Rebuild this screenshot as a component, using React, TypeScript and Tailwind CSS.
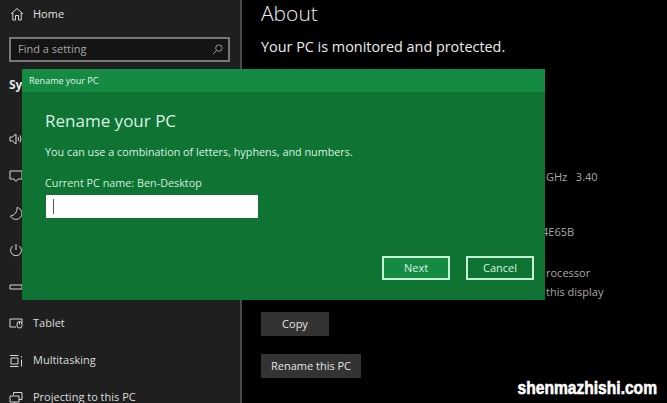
import React from "react";

const S = { fontFamily: '"Open Sans","Noto Sans",sans-serif' };

const ic = "w-[14px] h-[14px] text-[#d8d8d8] shrink-0";
const sv = { fill: "none", stroke: "currentColor", strokeWidth: 1 } as const;

const Home = () => (
  <svg viewBox="0 0 14 14" className={ic} {...sv}><path d="M1 7 7 1.5 13 7M2.8 5.6V13H5.5V8.5H8.5V13H11.2V5.6" /></svg>
);
const Sound = () => (
  <svg viewBox="0 0 14 14" className={ic} {...sv}><path d="M1 5H3.5L7 2V12L3.5 9H1ZM9 5Q10.2 7 9 9M11 3.5Q13 7 11 10.5" /></svg>
);
const Display = () => (
  <svg viewBox="0 0 14 14" className={ic} {...sv}><path d="M1 2H13V10H9L7 12.5 5 10H1Z" /></svg>
);
const Moon = () => (
  <svg viewBox="0 0 14 14" className={ic} {...sv}><path d="M8 1.5A6 6 0 1 1 1.5 10 7.5 7.5 0 0 0 8 1.5Z" /></svg>
);
const Power = () => (
  <svg viewBox="0 0 14 14" className={ic} {...sv}><path d="M7 1V7M4 2.8A5.4 5.4 0 1 0 10 2.8" /></svg>
);
const Battery = () => (
  <svg viewBox="0 0 14 14" className={ic} {...sv}><path d="M1 5H13V9H1Z" /></svg>
);
const Tablet = () => (
  <svg viewBox="0 0 14 14" className={ic} {...sv}><path d="M7 10H1V2H13V6M8 8.5A2.5 2.5 0 0 0 13 8.5V7A2.5 2.5 0 0 0 8 7ZM10.5 4.5V7.5" /></svg>
);
const Multi = () => (
  <svg viewBox="0 0 14 14" className={ic} {...sv}><path d="M1 1.5H9.5M1 12.5H9.5M2 4H9V10H2ZM12.5 2V3.5M12.5 5.5V12.5" /></svg>
);
const Project = () => (
  <svg viewBox="0 0 14 14" className={ic} {...sv}><path d="M4.5 4V1.5H13V8.5H10M1 5H10V11H1ZM3 13H8M5.5 11V13" /></svg>
);

function Row({ icon, label }: { icon: React.ReactNode; label?: string }) {
  return (
    <div className="h-[37px] flex items-center gap-[10px] pl-[9px] text-[11px] text-[#dcdcdc]">
      {icon}
      {label && <span>{label}</span>}
    </div>
  );
}

export default function App() {
  return (
    <div className="relative w-[667px] h-[403px] overflow-hidden flex bg-black" style={S}>
      <aside className="w-[242px] h-full bg-[#1f1f1f] border-r-2 border-[#4a4a4a] shrink-0 overflow-hidden">
        <div className="h-[28px] flex items-center gap-[9px] pl-[10px] text-[11px] text-[#e0e0e0]">
          <Home />
          <span>Home</span>
        </div>
        <div className="mt-[9px] ml-[9px] w-[221px] h-[25px] border-2 border-[#777777] bg-[#141414] flex items-center justify-between pl-[7px] pr-[5px] text-[11px] text-[#a5a5a5]">
          <span>Find a setting</span>
          <svg viewBox="0 0 12 12" className="w-[11px] h-[11px] text-[#a0a0a0]" fill="none" stroke="currentColor" strokeWidth="1">
            <circle cx="7.5" cy="4.5" r="3.5" />
            <path d="M5 7 1 11" />
          </svg>
        </div>
        <div className="mt-[14px] ml-[9px] h-[18px] text-[12px] font-bold text-[#e6e6e6] leading-[18px]">Sy</div>
        <div className="mt-[26px]">
          <Row icon={<Sound />} />
          <Row icon={<Display />} />
          <Row icon={<Moon />} />
          <Row icon={<Power />} />
          <Row icon={<Battery />} />
          <Row icon={<Tablet />} label="Tablet" />
          <Row icon={<Multi />} label="Multitasking" />
          <Row icon={<Project />} label="Projecting to this PC" />
        </div>
      </aside>

      <main className="flex-1 pl-[19px] pt-0 text-[#e8e8e8]">
        <h1 className="text-[21px] leading-[27px] font-light text-[#eeeeee]">About</h1>
        <p className="mt-[10px] text-[14.4px] leading-[20px] text-[#ececec]">Your PC is monitored and protected.</p>
        <div className="text-[11px] text-[#a8a8a8] pl-[285px]">
          <p className="mt-[112px] leading-[16px] whitespace-pre">GHz   3.40</p>
          <p className="mt-[39px] leading-[16px] -ml-[4px]">4E65B</p>
          <p className="mt-[25px] leading-[16px]">rocessor</p>
          <p className="mt-[3px] leading-[16px]">this display</p>
        </div>
        <button className="mt-[12px] block w-[68px] h-[24px] bg-[#333333] text-[11px] text-[#e4e4e4]">Copy</button>
        <button className="mt-[18px] block w-[100px] h-[24px] bg-[#333333] text-[11px] text-[#e4e4e4]">Rename this PC</button>
      </main>

      <div className="absolute left-[22px] top-[69px] w-[523px] h-[231px] bg-[#0e7333] flex flex-col">
        <div className="h-[23px] bg-[#148a42] flex items-center pl-[7px] text-[9px] text-[#e2f3e8]">Rename your PC</div>
        <div className="flex-1 pl-[23px] pr-[11px] flex flex-col">
          <h2 className="mt-[17px] text-[17px] leading-[24px] text-[#d9f3e2]">Rename your PC</h2>
          <p className="mt-[11px] text-[10.8px] leading-[16px] text-[#d9f3e2]">You can use a combination of letters, hyphens, and numbers.</p>
          <p className="mt-[15px] text-[10.8px] leading-[16px] text-[#d0f0db]">Current PC name: Ben-Desktop</p>
          <div className="mt-[4px] ml-[1px] w-[212px] h-[23px] bg-white flex items-center pl-[7px]">
            <div className="w-px h-[15px] bg-[#555555]" />
          </div>
          <div className="mt-auto mb-[20px] flex justify-end gap-[16px]">
            <button className="w-[68px] h-[24px] border-2 border-[#c4f0d4] bg-[#148a42] text-[11px] text-[#d9f3e2]">Next</button>
            <button className="w-[68px] h-[24px] border-2 border-[#c4f0d4] bg-[#0e7333] text-[11px] text-[#d9f3e2]">Cancel</button>
          </div>
        </div>
      </div>

      <div className="absolute right-[10px] bottom-[3px] text-[19px] leading-[24px] font-bold text-white scale-x-[0.82] origin-right [-webkit-text-stroke:0.6px_white]" style={{ fontFamily: '"Liberation Sans",sans-serif' }}>
        shenmazhishi.com
      </div>
    </div>
  );
}
